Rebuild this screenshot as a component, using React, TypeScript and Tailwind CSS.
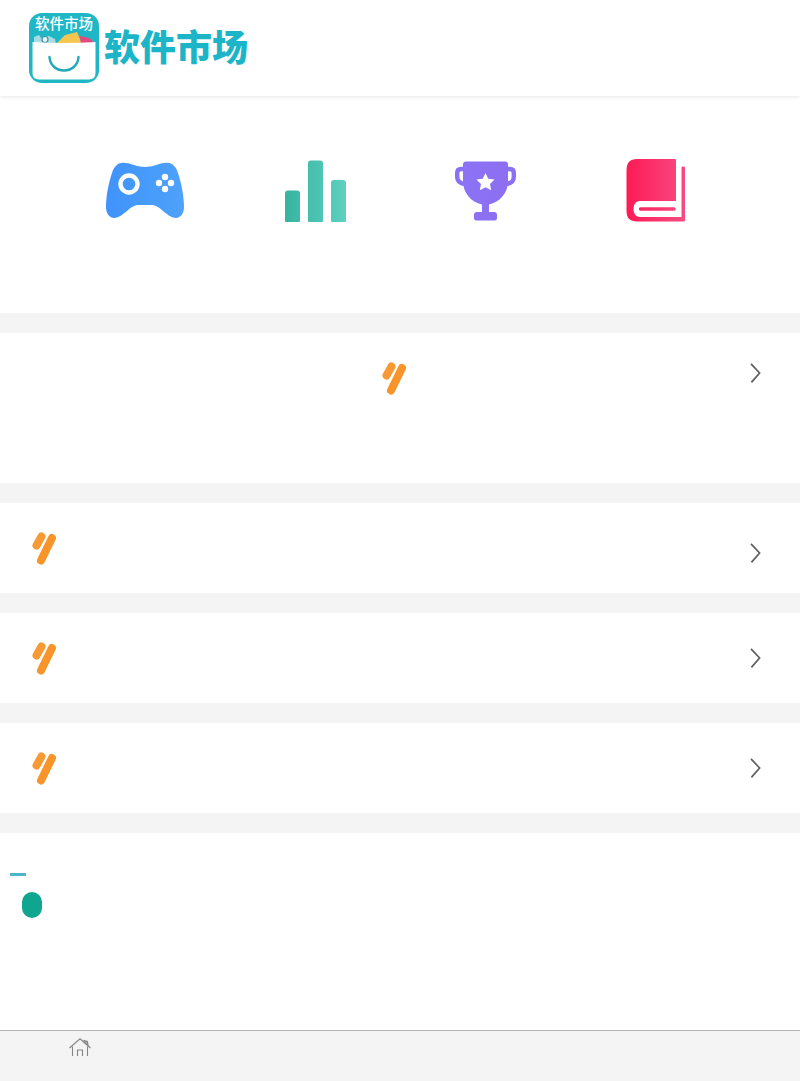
import React from "react";

function Slash() {
  return (
    <svg width="25" height="33" viewBox="0 0 25 33" className="block">
      <path d="M4.5 13.5 L9.5 4.5" stroke="#f79a33" strokeWidth="8" strokeLinecap="round" fill="none" />
      <path d="M9 28.5 L20 6" stroke="#f7952b" strokeWidth="8" strokeLinecap="round" fill="none" />
    </svg>
  );
}

function Chevron() {
  return (
    <svg width="11" height="20" viewBox="0 0 11 20" className="block">
      <path d="M1 0.8 L9.6 10 L1.4 19.4" stroke="#5f5f5f" strokeWidth="1.7" fill="none" />
    </svg>
  );
}

function Pad() {
  return (
    <svg width="78" height="56" viewBox="0 0 78 56" className="block">
      <defs>
        <linearGradient id="pg" x1="0" y1="0" x2="1" y2="0">
          <stop offset="0" stopColor="#3f93fb" />
          <stop offset="1" stopColor="#4ea2fa" />
        </linearGradient>
      </defs>
      <path
        d="M17 0.8C23 0.5 29 4 34 4.6C37 5 41 5 44 4.6C49 4 55 0.5 61 0.8C67 1 70 5 72 11C75 20 78 33 78 45C78 52 74 56 70 56C65 56 61 52 57 49C53 45.5 50 43 45 43L33 43C28 43 25 45.5 21 49C17 52 13 56 8 56C4 56 0 52 0 45C0 33 3 20 6 11C8 5 11 1 17 0.8Z"
        fill="url(#pg)"
      />
      <circle cx="23" cy="22" r="8.5" fill="none" stroke="#fff" strokeWidth="4.4" />
      <circle cx="59" cy="15" r="3.2" fill="#fff" />
      <circle cx="59" cy="27" r="3.2" fill="#fff" />
      <circle cx="53" cy="21" r="3.2" fill="#fff" />
      <circle cx="65" cy="21" r="3.2" fill="#fff" />
    </svg>
  );
}

function Bars() {
  return (
    <svg width="61" height="62" viewBox="0 0 61 62" className="block">
      <defs>
        <linearGradient id="bg" x1="0" y1="0" x2="61" y2="0" gradientUnits="userSpaceOnUse">
          <stop offset="0" stopColor="#37b3a2" />
          <stop offset="1" stopColor="#5ed0c0" />
        </linearGradient>
      </defs>
      <path
        d="M3 30.5H12Q15 30.5 15 33.5V61Q15 62 14 62H1Q0 62 0 61V33.5Q0 30.5 3 30.5ZM26 0.5H35Q38 0.5 38 3.5V61Q38 62 37 62H24Q23 62 23 61V3.5Q23 0.5 26 0.5ZM49 20H58Q61 20 61 23V61Q61 62 60 62H47Q46 62 46 61V23Q46 20 49 20Z"
        fill="url(#bg)"
      />
    </svg>
  );
}

function Trophy() {
  return (
    <svg width="61" height="60" viewBox="0 0 61 60" className="block">
      <defs>
        <linearGradient id="tg" x1="0" y1="0" x2="1" y2="0">
          <stop offset="0" stopColor="#8b72f6" />
          <stop offset="1" stopColor="#8d6ff0" />
        </linearGradient>
      </defs>
      <path
        d="M12 8H6Q2.2 8 2.2 12V16Q2.2 21.5 9 23M49 8H55Q58.8 8 58.8 12V16Q58.8 21.5 52 23"
        fill="none"
        stroke="#8b70f3"
        strokeWidth="4.4"
      />
      <path
        d="M11 0.5H50Q53 0.5 53 3.5V20C53 32 45 41 34 43.5V51H39Q42 51 42 54V57Q42 59.5 39.5 59.5H21.5Q19 59.5 19 57V54Q19 51 22 51H27V43.5C16 41 8 32 8 20V3.5Q8 0.5 11 0.5Z"
        fill="url(#tg)"
      />
      <path
        d="M30.5 12L33.3 17.8L39.6 18.6L35 23L36.2 29.3L30.5 26.2L24.8 29.3L26 23L21.4 18.6L27.7 17.8Z"
        fill="#fff"
      />
    </svg>
  );
}

function Book() {
  return (
    <svg width="60" height="63" viewBox="0 0 60 63" className="block">
      <defs>
        <linearGradient id="kg" x1="0" y1="0" x2="60" y2="0" gradientUnits="userSpaceOnUse">
          <stop offset="0" stopColor="#fd1a55" />
          <stop offset="1" stopColor="#f84b83" />
        </linearGradient>
      </defs>
      <path
        d="M11 0H49Q50 0 50 1V42H14C10 42 7.5 45.5 7.5 50C7.5 54.5 10 58 14 58H55.5V8.5Q55.5 7.5 57 7.5Q59 7.5 59 8.5V61.5Q59 62.5 58 62.5H11Q0.5 62.5 0.5 52V11Q0.5 0 11 0Z"
        fill="url(#kg)"
      />
      <path d="M14.5 50H48" stroke="url(#kg)" strokeWidth="3.4" strokeLinecap="round" fill="none" />
    </svg>
  );
}

function Logo() {
  return (
    <div className="relative w-[70px] h-[70px] rounded-[13px] bg-[#1fb6c6] overflow-hidden">
      <div className="text-white text-[14.5px] leading-[20px] font-medium text-center whitespace-nowrap">软件市场</div>
      <svg width="70" height="70" viewBox="0 0 70 70" className="absolute left-0 top-0">
        <path d="M5 24L10 22L12 25L20 23L26 26L27 31H5Z" fill="#a9dbe4" />
        <circle cx="16" cy="26.5" r="3" fill="#e4f6f9" stroke="#3f8fa6" strokeWidth="1.2" />
        <path d="M27 31L36 22L48 19L53 31Z" fill="#f5c64f" />
        <path d="M51 23L60 25L67 31H52Z" fill="#e9457f" />
        <path d="M3.5 29Q35 31 66.5 29V60Q66.5 66.5 60 66.5H10Q3.5 66.5 3.5 60Z" fill="#fff" />
        <path d="M20.5 44C21 52 27 57.5 35 57.5C43 57.5 49 52 49.5 44" fill="none" stroke="#1fa9b8" strokeWidth="2.4" strokeLinecap="round" />
      </svg>
    </div>
  );
}

function Gap() {
  return <div className="h-5 bg-[#f4f4f4]" />;
}

function Row({ top }: { top: string }) {
  return (
    <div className="h-[90px] bg-white flex justify-between pl-[32px] pr-[39px]">
      <div className="pt-[29px]">
        <Slash />
      </div>
      <div className={top}>
        <Chevron />
      </div>
    </div>
  );
}

export default function App() {
  return (
    <div
      className="w-[800px] h-[1081px] bg-white flex flex-col overflow-hidden"
      style={{ fontFamily: '"Noto Sans CJK SC", sans-serif' }}
    >
      <header className="h-[96px] bg-white shadow-[0_1px_4px_rgba(0,0,0,0.1)] flex items-center pl-[29px] gap-[5px] relative">
        <Logo />
        <div className="text-[36px] leading-[44px] font-black text-[#1cb5c7] -mt-[6px] whitespace-nowrap">软件市场</div>
      </header>

      <section className="h-[217px] px-[60px] grid grid-cols-4 items-start">
        <div className="flex justify-center pt-[66px]">
          <Pad />
        </div>
        <div className="flex justify-center pt-[64px]">
          <Bars />
        </div>
        <div className="flex justify-center pt-[65px]">
          <Trophy />
        </div>
        <div className="flex justify-center pt-[63px] pl-[2px]">
          <Book />
        </div>
      </section>

      <Gap />
      <div className="h-[150px] bg-white flex pr-[39px]">
        <div className="ml-[382px] pt-[29px]">
          <Slash />
        </div>
        <div className="ml-auto pt-[30px]">
          <Chevron />
        </div>
      </div>
      <Gap />
      <Row top="pt-[40px]" />
      <Gap />
      <Row top="pt-[35px]" />
      <Gap />
      <Row top="pt-[35px]" />
      <Gap />

      <section className="flex-1 bg-white pt-[40px]">
        <div className="ml-[10px] w-4 h-[3px] bg-[#4fb3c9]" />
        <div className="ml-[22px] mt-[16px] w-5 h-[26px] rounded-[10px] bg-[#0fa68f]" />
      </section>

      <footer className="h-[51px] bg-[#f4f4f4] border-t border-[#b4b4b4] pl-[69px] pt-[7px]">
        <svg width="22" height="19" viewBox="0 0 22 19" className="block" fill="none" stroke="#858585" strokeWidth="1.1">
          <path d="M0.5 10L11 0.8L21.5 10" />
          <path d="M15 2.5L18.5 3.5L19 7.5L15 4Z" fill="#b0b0b0" />
          <path d="M3.5 8.5V18M18.5 8.5V18" />
          <path d="M8.5 18V12H13.5V18" />
        </svg>
      </footer>
    </div>
  );
}
